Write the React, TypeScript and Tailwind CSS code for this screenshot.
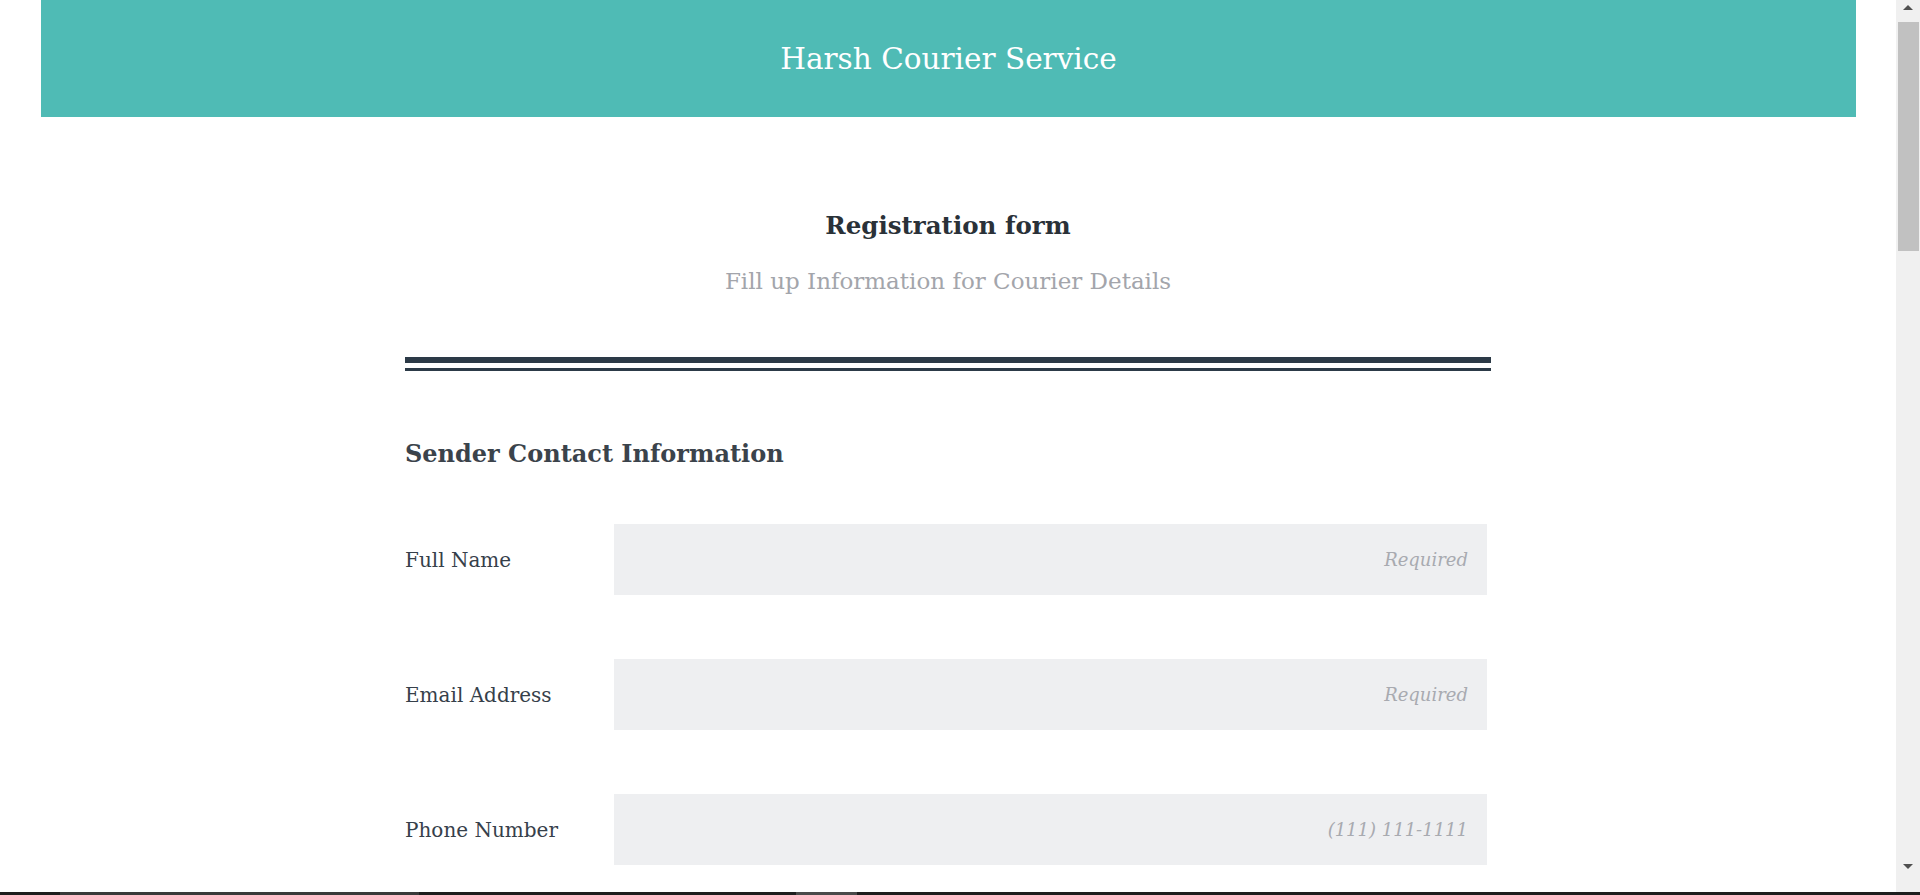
import React from 'react';

const serif = { fontFamily: '"DejaVu Serif", "Liberation Serif", serif' };

const fields = [
  { label: 'Full Name', placeholder: 'Required', type: 'text' },
  { label: 'Email Address', placeholder: 'Required', type: 'email' },
  { label: 'Phone Number', placeholder: '(111) 111-1111', type: 'tel' },
];

function FakeScrollbar() {
  return (
    <div className="flex h-full w-[24px] shrink-0 flex-col items-center bg-[#f0f0f0]">
      <div className="flex h-[14px] w-full items-center justify-center">
        <div className="h-0 w-0 border-x-[5px] border-b-[5px] border-x-transparent border-b-[#505050]" />
      </div>
      <div className="mt-[8px] h-[229px] w-[21px] bg-[#c1c1c1]" />
      <div className="flex-1" />
      <div className="mb-[22px] flex h-[14px] w-full items-center justify-center">
        <div className="h-0 w-0 border-x-[5px] border-t-[5px] border-x-transparent border-t-[#505050]" />
      </div>
    </div>
  );
}

export default function App() {
  return (
    <div className="relative flex h-[895px] w-[1920px] overflow-hidden bg-white" style={serif}>
      <div className="h-full w-[1896px] shrink-0 overflow-hidden">
        <header className="ml-[41px] flex h-[117px] w-[1815px] items-center justify-center bg-[#4fbbb5]">
          <h1 className="text-[29.5px] leading-[36px] font-normal text-white">Harsh Courier Service</h1>
        </header>

        <main className="mx-auto w-[1086px]">
          <div className="pt-[94px] text-center">
            <h2 className="text-[24.5px] leading-[30px] font-bold text-[#2a3138]">Registration form</h2>
            <p className="mt-[26px] text-[23px] leading-[28px] text-[#a3a5ab]">
              Fill up Information for Courier Details
            </p>
          </div>

          <div className="mt-[62px]">
            <div className="h-[6px] bg-[#2c3a47]" />
            <div className="mt-[5px] h-[3px] bg-[#2c3a47]" />
          </div>

          <h3 className="mt-[68px] text-[24px] leading-[30px] font-bold text-[#3b434b]">
            Sender Contact Information
          </h3>

          <form className="mt-[55px] flex flex-col gap-[64px]">
            {fields.map((f) => (
              <div key={f.label} className="flex items-center">
                <label className="w-[209px] text-[20px] text-[#36404a]">{f.label}</label>
                <input
                  type={f.type}
                  placeholder={f.placeholder}
                  className="h-[71px] w-[873px] bg-[#eeeff1] pr-[19px] text-right text-[18px] text-[#36404a] outline-none placeholder:italic placeholder:text-[#a8aab0]"
                  style={serif}
                />
              </div>
            ))}
          </form>
        </main>
      </div>

      <FakeScrollbar />

      <div className="absolute bottom-0 left-0 flex h-[3px] w-full bg-[#1e1e1e]">
        <div className="ml-[60px] h-full w-[359px] bg-[#3a3a3a]" />
        <div className="ml-[377px] h-full w-[61px] bg-[#4a4a4a]" />
      </div>
    </div>
  );
}
